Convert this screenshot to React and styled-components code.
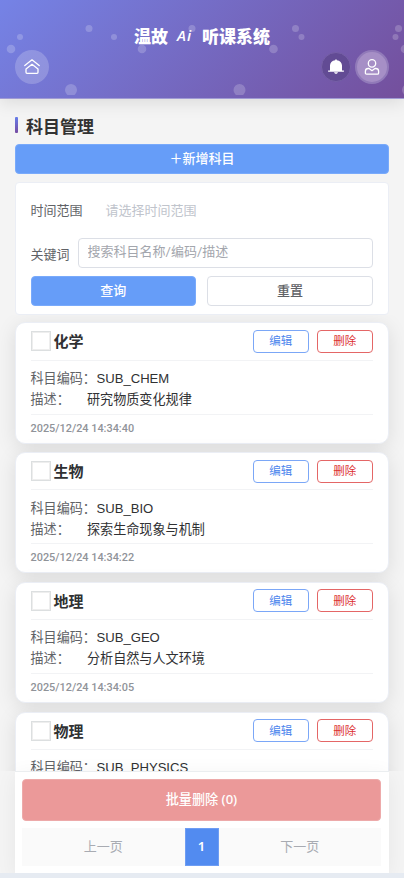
import React from 'react'
import styled, { createGlobalStyle } from 'styled-components'

const GlobalStyle = createGlobalStyle`
  * {
    box-sizing: border-box;
  }
  body {
    margin: 0;
    overflow: hidden;
    background: #f4f4f4;
    color: #303133;
    font-family: Roboto, "Noto Sans CJK SC", sans-serif;
    font-size: 13px;
  }
  button, input {
    font-family: inherit;
    margin: 0;
  }
`
const Page = styled.div`
  height: 878px;
  display: flex;
  flex-direction: column;
  overflow: hidden;
  border-bottom: 5px solid #e6ebf2;
`
const Header = styled.header`
  position: relative;
  z-index: 2;
  flex: none;
  height: 99px;
  padding: 22px 15px 0;
  background: linear-gradient(135deg, #7583e6 0%, #744f9c 100%);
  border-bottom: 1px solid #a09bd4;
  box-shadow: 0 4px 16px rgba(0, 0, 0, 0.1);
`
const Bubbles = styled.svg`
  position: absolute;
  left: 0;
  top: 0;
`
const Brand = styled.h1`
  position: relative;
  display: flex;
  justify-content: center;
  margin: 0;
  height: 28px;
  line-height: 30px;
  font-size: 17px;
  font-weight: 900;
  color: #fff;
  em {
    width: 34px;
    padding-right: 1px;
    line-height: 27px;
    text-align: center;
    font-family: "Open Sans", sans-serif;
    font-size: 15px;
    font-weight: 600;
    letter-spacing: 1px;
  }
`
const HeaderTools = styled.div`
  position: relative;
  display: flex;
  align-items: center;
  height: 34px;
`
const RoundButton = styled.button`
  display: flex;
  align-items: center;
  justify-content: center;
  width: ${p => p.$size}px;
  height: ${p => p.$size}px;
  padding: 0;
  border: ${p => p.$border || 'none'};
  border-radius: 50%;
  background: ${p => p.$bg};
  margin-left: ${p => p.$left || '0'};
`
const Main = styled.main`
  flex: 1;
  min-height: 0;
  padding: 18px 15px 0;
  display: flex;
  flex-direction: column;
`
const PageTitle = styled.h2`
  display: flex;
  align-items: center;
  flex: none;
  gap: 8px;
  height: 20px;
  margin: 0 0 7px;
  font-size: 17px;
  line-height: 20px;
  font-weight: 700;
  color: #333;
  &::before {
    content: "";
    width: 3px;
    height: 16px;
    margin-top: -5px;
    border-radius: 1px;
    background: linear-gradient(#667eea, #764ba2);
  }
`
const Button = styled.button`
  flex: ${p => (p.$block ? 'none' : 1)};
  height: 30px;
  padding: 0 0 4px;
  border-radius: 4px;
  border: 1px solid ${p => (p.$primary ? '#79aafb' : '#dcdfe6')};
  background: ${p => (p.$primary ? '#669df8' : '#fff')};
  color: ${p => (p.$primary ? '#fff' : '#606266')};
  font-size: 13px;
  font-weight: 500;
`
const Filter = styled.section`
  flex: none;
  height: 133px;
  margin: 7.5px 0 0;
  padding: 12px 15px 0 14.5px;
  background: #fff;
  border: 1px solid #ebeef5;
  border-radius: 4px;
`
const Field = styled.label`
  display: flex;
  align-items: center;
  height: 30px;
  color: #606266;
`
const DateHint = styled.span`
  margin-left: 23px;
  color: #c0c4cc;
`
const Input = styled.input`
  flex: 1;
  min-width: 0;
  height: 30px;
  margin-left: 8px;
  padding: 0 9px 3px;
  border: 1px solid #dcdfe6;
  border-radius: 4px;
  font-size: 13px;
  &::placeholder {
    color: #a3a6ad;
  }
`
const FilterRow = styled.div`
  margin-top: 13.5px;
`
const Actions = styled.div`
  display: flex;
  gap: 11px;
  margin-top: 8px;
`
// stretches to the page edges so the card shadows are not cut at the sides
const List = styled.div`
  flex: 1;
  min-height: 0;
  margin: 0 -15px;
  padding: 7.5px 15px 0;
  overflow: hidden;
  display: flex;
  flex-direction: column;
  gap: 8.25px;
`
const Card = styled.article`
  flex: none;
  height: 121.6px;
  padding: 0 15px 0 14.5px;
  border: 1px solid #ebeef5;
  border-radius: 10px;
  background: #fff;
  box-shadow: 0 4px 20px rgba(0, 0, 0, 0.1);
`
const CardHead = styled.div`
  display: flex;
  align-items: center;
  height: 37.5px;
  border-bottom: 1px solid #f2f3f5;
`
const Check = styled.span`
  width: 20px;
  height: 20px;
  margin-right: 3px;
  border: 1px solid #dcdfe0;
  box-shadow: inset 0 0 0 1px #eee;
`
const Name = styled.strong`
  flex: 1;
  padding-bottom: 1px;
  font-size: 15px;
  font-weight: 700;
  color: #303133;
`
const SmallButton = styled.button`
  width: 56.5px;
  height: 23px;
  margin-left: 7.5px;
  padding: 0 0 2px;
  border: 1px solid ${p => (p.$danger ? '#e46666' : '#7ba7f7')};
  border-radius: 4px;
  background: #fff;
  color: ${p => (p.$danger ? '#dc3030' : '#4d86ed')};
  font-size: 11.5px;
`
const CardBody = styled.div`
  height: 54px;
  padding-top: 7.3px;
  border-bottom: 1px solid #f2f3f5;
  font-family: "Liberation Sans", "Noto Sans CJK SC", sans-serif;
  font-size: 13.1px;
`
const Line = styled.div`
  display: flex;
  height: 21px;
  line-height: 21px;
  color: #303133;
  span {
    width: ${p => p.$label}px;
    color: #606266;
  }
`
const Time = styled.time`
  display: block;
  line-height: 28px;
  font-size: 10.9px;
  font-weight: 500;
  color: #909399;
`
const Footer = styled.footer`
  position: relative;
  z-index: 1;
  flex: none;
  height: 102px;
  padding: 7px 8px 0 7px;
  background: #fff;
  border-top: 1px solid #ebeef0;
  box-shadow: 0 4px 20px rgba(0, 0, 0, 0.06);
`
const BatchDelete = styled.button`
  display: block;
  width: 100%;
  height: 42px;
  padding: 0 0 3px;
  border: 1px solid #edaaaa;
  border-radius: 4px;
  background: #eb9999;
  color: #fff;
  font-family: "Noto Sans", "Noto Sans CJK SC", sans-serif;
  font-size: 13.1px;
  font-weight: 500;
`
const Pager = styled.div`
  display: flex;
  height: 38px;
  margin-top: 7px;
  background: #fafafa;
`
const PageLink = styled.span`
  flex: 1;
  text-align: center;
  line-height: 38px;
  color: #a8abb2;
`
const Current = styled.span`
  width: 34px;
  text-align: center;
  line-height: 35px;
  background: #528bf0;
  border: 1px solid #6e9df3;
  color: #fff;
  font-family: "Noto Sans", sans-serif;
  font-size: 13px;
  font-weight: 600;
`

const bubbles = [
  [20, 37, 3], [11, 49, 4.3], [89, 28.5, 3.5], [114, 37, 3], [142, 49, 4.3],
  [71, 90, 6], [192, 28.5, 3.5], [295.5, 28.5, 3.5], [301.5, 37, 3],
  [273.5, 49, 4.3], [239.5, 90, 6], [398.5, 28.5, 3.5], [395.5, 37, 3],
  [405, 49, 4.3], [408, 90, 6]
]

const subjects = [
  { name: '化学', code: 'SUB_CHEM', desc: '研究物质变化规律', time: '2025/12/24 14:34:40' },
  { name: '生物', code: 'SUB_BIO', desc: '探索生命现象与机制', time: '2025/12/24 14:34:22' },
  { name: '地理', code: 'SUB_GEO', desc: '分析自然与人文环境', time: '2025/12/24 14:34:05' },
  { name: '物理', code: 'SUB_PHYSICS' }
]

const HomeIcon = () => (
  <svg width="16" height="16" viewBox="0 0 16 16" fill="none" stroke="#fff" strokeWidth="1.3" strokeLinejoin="round" strokeLinecap="round">
    <path d="M.8 6.6 8 .8l7.2 5.8" />
    <path d="M2 9.9 8 5.3l6 4.6v3.4q0 1-1 1H3q-1 0-1-1z" />
  </svg>
)

const BellIcon = () => (
  <svg width="16" height="16" viewBox="0 0 16 16" fill="#fff">
    <path d="M7.2 .5h1.6v.7c3.2.4 5.200 2.500 5.200 5.400v4.900h1.900v1.300H.1v-1.300H2V6.600c0-2.900 2-5 5.200-5.400z" />
    <path d="M6 13.300h4c-.2.9-.9 1.500-2 1.500s-1.800-.6-2-1.500z" />
  </svg>
)

const UserIcon = () => (
  <svg width="16" height="17" viewBox="0 0 16 17" fill="none" stroke="#fff" strokeWidth="1.3" strokeLinejoin="round">
    <circle cx="8" cy="4.4" r="3.700" />
    <path d="M4.300 9.500h.8L8 11.700l2.900-2.200h.8q2.900 0 2.900 2.800v1.700q0 1.200-1.200 1.200H2.600q-1.200 0-1.200-1.200v-1.700q0-2.800 2.900-2.800z" />
  </svg>
)

const SubjectCard = ({ name, code, desc, time }) => (
  <Card>
    <CardHead>
      <Check />
      <Name>{name}</Name>
      <SmallButton>编辑</SmallButton>
      <SmallButton $danger>删除</SmallButton>
    </CardHead>
    <CardBody>
      <Line $label={66}><span>科目编码：</span>{code}</Line>
      {desc && <Line $label={56.5}><span>描述：</span>{desc}</Line>}
    </CardBody>
    {time && <Time>{time}</Time>}
  </Card>
)

const App = () => (
  <Page>
    <GlobalStyle />
    <Header>
      <Bubbles width="404" height="95" fill="rgba(255,255,255,0.2)">
        {bubbles.map(([x, y, r]) => <circle key={`${x}-${y}`} cx={x} cy={y} r={r} />)}
      </Bubbles>
      <Brand>温故<em>Ai</em>听课系统</Brand>
      <HeaderTools>
        <RoundButton $size={34} $bg="rgba(255,255,255,0.2)"><HomeIcon /></RoundButton>
        <RoundButton $size={30} $bg="#624b94" $border="1px solid #7660a7" $left="auto"><BellIcon /></RoundButton>
        <RoundButton $size={34} $bg="#a68fc6" $border="2px solid #917ab9" $left="4px"><UserIcon /></RoundButton>
      </HeaderTools>
    </Header>
    <Main>
      <PageTitle>科目管理</PageTitle>
      <Button $primary $block>＋新增科目</Button>
      <Filter>
        <Field>时间范围<DateHint>请选择时间范围</DateHint></Field>
        <FilterRow>
          <Field>关键词<Input placeholder="搜索科目名称/编码/描述" /></Field>
        </FilterRow>
        <Actions>
          <Button $primary>查询</Button>
          <Button>重置</Button>
        </Actions>
      </Filter>
      <List>
        {subjects.map(s => <SubjectCard key={s.code} {...s} />)}
      </List>
      <Footer>
        <BatchDelete>批量删除 (0)</BatchDelete>
        <Pager>
          <PageLink>上一页</PageLink>
          <Current>1</Current>
          <PageLink>下一页</PageLink>
        </Pager>
      </Footer>
    </Main>
  </Page>
)

export default App
